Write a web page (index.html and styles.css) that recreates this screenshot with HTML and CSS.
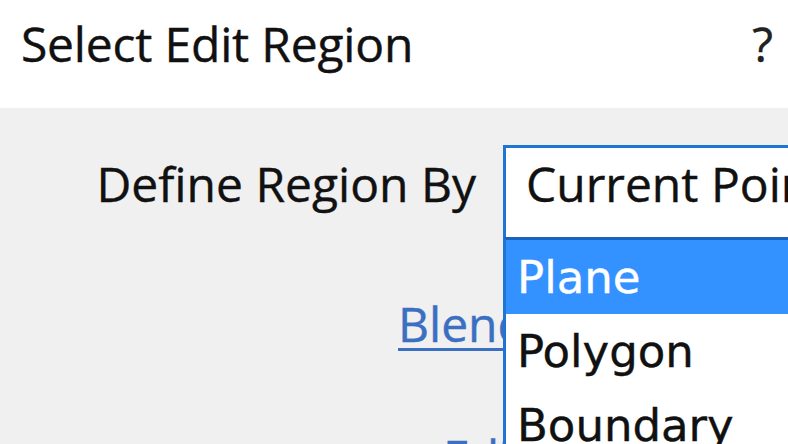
FILE: index.html
```html
<!DOCTYPE html>
<html lang="en">
<head>
<meta charset="utf-8">
<title>Select Edit Region</title>
<link rel="stylesheet" href="styles.css">
</head>
<body>
<div class="dialog">
  <div class="titlebar">
    <span class="title">Select Edit Region</span>
    <span class="help">?</span>
  </div>
  <div class="content">
    <div class="field-row">
      <label class="field-label">Define Region By</label>
      <div class="combo">
        <span class="combo-value">Current Point</span>
        <ul class="dropdown">
          <li class="option selected">Plane</li>
          <li class="option">Polygon</li>
          <li class="option">Boundary</li>
        </ul>
      </div>
    </div>
    <a class="link link-blend" href="#">Blend Region</a>
    <a class="link link-edit" href="#">Edit Region</a>
  </div>
</div>
</body>
</html>
```

FILE: styles.css
```css
html, body {
  margin: 0;
  padding: 0;
  overflow: hidden;
}

body {
  width: 788px;
  height: 444px;
  font-family: "Open Sans", "Noto Sans", sans-serif;
  color: #111111;
}

.dialog {
  width: 788px;
  height: 444px;
  overflow: hidden;
  background: #f0f0f0;
}

.titlebar {
  height: 108px;
  box-sizing: border-box;
  background: #ffffff;
  display: flex;
  justify-content: space-between;
  align-items: flex-start;
  padding: 20px 15px 0 21px;
  font-size: 48px;
  line-height: 48px;
  -webkit-text-stroke: 0.4px #111111;
}

.title {
  letter-spacing: -0.2px;
}

.help {
  color: #222222;
}

.content {
  display: flex;
  flex-direction: column;
  align-items: flex-start;
  padding-top: 37px;
  font-size: 48px;
  line-height: 48px;
  -webkit-text-stroke: 0.4px currentColor;
}

.field-row {
  display: grid;
  grid-template-columns: 503px 420px;
  align-items: baseline;
}

.field-label {
  text-align: right;
  padding-right: 27px;
}

.combo {
  position: relative;
  height: 92px;
  box-sizing: border-box;
  border-top: 3px solid #1f74d4;
  border-left: 3px solid #1f74d4;
  background: #ffffff;
  padding: 12px 0 0 20px;
  white-space: nowrap;
}

.dropdown {
  position: absolute;
  top: 89px;
  left: -3px;
  width: 420px;
  margin: 0;
  padding: 0;
  list-style: none;
  background: #ffffff;
  border-top: 3px solid #1a62c0;
  border-left: 3px solid #1f74d4;
  font-family: "DejaVu Sans", Verdana, sans-serif;
  font-size: 45px;
  z-index: 2;
}

.option {
  height: 74px;
  line-height: 76px;
  padding-left: 11px;
  color: #111111;
}

.option.selected {
  background: #3392ff;
  color: #ffffff;
}

.link {
  color: #3a6fc2;
  text-decoration: underline;
  text-decoration-thickness: 3px;
  text-underline-offset: 6px;
  white-space: nowrap;
}

.link-blend {
  margin-top: 63px;
  margin-left: 398px;
}

.link-edit {
  margin-top: 85px;
  margin-left: 443px;
}
```
